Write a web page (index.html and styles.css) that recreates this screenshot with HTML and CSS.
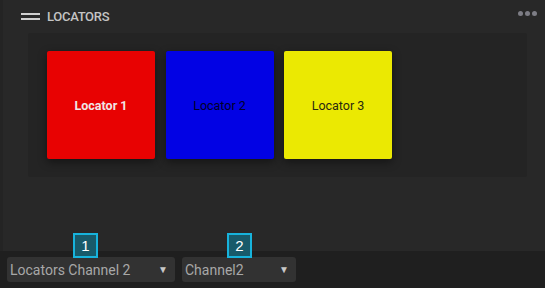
FILE: index.html
```html
<!DOCTYPE html>
<html>
<head>
<meta charset="utf-8">
<link rel="stylesheet" href="styles.css">
</head>
<body>
<div class="app">
  <div class="main">
    <div class="header">
      <svg class="hamburger" width="19" height="8" viewBox="0 0 19 8"><rect x="0" y="0" width="19" height="2" fill="#cfcfcf"/><rect x="0" y="5" width="19" height="2" fill="#cfcfcf"/></svg>
      <span class="title">LOCATORS</span>
      <span class="dots"><i></i><i></i><i></i></span>
    </div>
    <div class="panel">
      <div class="loc red">Locator 1</div>
      <div class="loc blue">Locator 2</div>
      <div class="loc yellow">Locator 3</div>
    </div>
  </div>
  <div class="bottom">
    <div class="select sel1">
      <span>Locators Channel 2</span><span class="arrow">▼</span>
      <div class="badge b1">1</div>
    </div>
    <div class="select sel2">
      <span>Channel2</span><span class="arrow">▼</span>
      <div class="badge b2">2</div>
    </div>
  </div>
</div>
</body>
</html>
```
FILE: styles.css
```css
html, body {
  margin: 0;
  padding: 0;
}
body {
  background: #282828;
  font-family: Roboto, "Liberation Sans", sans-serif;
  width: 545px;
  height: 288px;
  overflow: hidden;
}
.app {
  display: flex;
  flex-direction: column;
  height: 288px;
}
.main {
  flex: 1;
  border-left: 3px solid #242424;
}
.header {
  height: 33px;
  display: flex;
  align-items: center;
  padding-left: 18px;
  padding-right: 8px;
  box-sizing: border-box;
}
.hamburger {
  display: block;
  margin-top: 1px;
}
.title {
  margin-left: 7px;
  color: #c4c4c4;
  font-size: 13px;
  font-weight: 500;
  letter-spacing: -0.3px;
  margin-top: -1px;
}
.dots {
  margin-left: auto;
  display: flex;
  gap: 2px;
  margin-top: -6px;
}
.dots i {
  display: block;
  width: 5px;
  height: 5px;
  border-radius: 50%;
  background: #7d7d85;
}
.panel {
  margin: 0 18px 0 25px;
  height: 144px;
  background: #242424;
  border-radius: 2px;
  padding: 18px 19px;
  box-sizing: border-box;
  display: flex;
  gap: 10.5px;
}
.loc {
  width: 108px;
  height: 108px;
  border-radius: 2px;
  display: flex;
  align-items: center;
  justify-content: center;
  font-size: 12.5px;
  box-shadow: 0 3px 10px rgba(0,0,0,0.45);
  padding-top: 0;
  box-sizing: border-box;
}
.red {
  background: #e80202;
  color: #f0e6e6;
  font-weight: 700;
}
.blue {
  background: #0202e4;
  color: #00002a;
}
.yellow {
  background: #ebe902;
  color: #2a2910;
}
.bottom {
  height: 37px;
  background: #1f1f1f;
  display: flex;
  gap: 7px;
  padding: 6px 7px;
  box-sizing: border-box;
}
.select {
  position: relative;
  height: 25px;
  background: #323232;
  border-radius: 3px;
  display: flex;
  align-items: center;
  justify-content: space-between;
  padding: 0 7px 0 3px;
  box-sizing: border-box;
  color: #a8a8a8;
  font-size: 14px;
}
.sel1 { width: 168px; }
.sel2 { width: 114px; }
.arrow {
  font-size: 10px;
  color: #c8c8c8;
}
.badge {
  position: absolute;
  top: -24px;
  width: 25px;
  height: 25px;
  box-sizing: border-box;
  border: 2px solid #17b3dc;
  background: #185a6a;
  color: #ffffff;
  font-size: 15px;
  display: flex;
  align-items: center;
  justify-content: center;
  font-family: "Liberation Sans", sans-serif;
}
.b1 { left: 66px; }
.b2 { left: 45px; }
```
